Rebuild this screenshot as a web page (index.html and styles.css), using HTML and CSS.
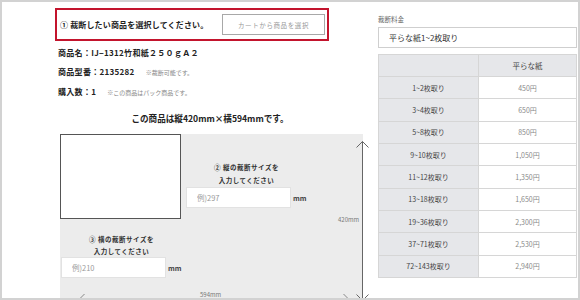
FILE: index.html
```html
<!DOCTYPE html>
<html lang="ja">
<head>
<meta charset="utf-8">
<title>裁断サービス</title>
<link rel="stylesheet" href="styles.css">
</head>
<body>
<div class="frame">
  <div class="left">
    <div class="pick-box">
      <span class="pick-title">① 裁断したい商品を選択してください。</span>
      <button class="cart-btn">カートから商品を選択</button>
    </div>
    <div class="info">
      <p class="info-row"><b>商品名：IJ−1312竹和紙２５０ｇＡ２</b></p>
      <p class="info-row"><b>商品型番：2135282</b><span class="note">※裁断可能です。</span></p>
      <p class="info-row"><b>購入数：1</b><span class="note">※この商品はパック商品です。</span></p>
    </div>
    <p class="size-line">この商品は縦420mm×横594mmです。</p>
    <div class="diagram">
      <div class="sheet"></div>
      <div class="cell-v">
        <div class="field">
          <div class="field-label">② 縦の裁断サイズを<br>入力してください</div>
          <div class="field-row"><input class="field-input" type="text" placeholder="例)297"><span class="unit">mm</span></div>
        </div>
      </div>
      <div class="cell-h">
        <div class="field field-h">
          <div class="field-label">③ 横の裁断サイズを<br>入力してください</div>
          <div class="field-row"><input class="field-input" type="text" placeholder="例)210"><span class="unit">mm</span></div>
        </div>
      </div>
      <svg class="arrow-v" width="13" height="160" viewBox="0 0 13 160">
        <path d="M6.5 0.5 V159.5 M0.5 6.5 L6.5 0.5 L12.5 6.5 M0.5 153.5 L6.5 159.5 L12.5 153.5" fill="none" stroke="#666" stroke-width="1"/>
      </svg>
      <span class="dim-v">420mm</span>
      <svg class="arrow-h" width="272" height="16" viewBox="0 0 272 16">
        <path d="M0.5 9 H271.5 M6.5 3 L0.5 9 L6.5 15 M265.5 3 L271.5 9 L265.5 15" fill="none" stroke="#888" stroke-width="1"/>
      </svg>
      <span class="dim-h">594mm</span>
    </div>
  </div>
  <div class="right">
    <div class="fee-label">裁断料金</div>
    <div class="fee-select">平らな紙1~2枚取り</div>
    <div class="price-table">
      <div class="pc head"></div><div class="pc head">平らな紙</div>
      <div class="pc key">1~2枚取り</div><div class="pc val">450円</div>
      <div class="pc key">3~4枚取り</div><div class="pc val">650円</div>
      <div class="pc key">5~8枚取り</div><div class="pc val">850円</div>
      <div class="pc key">9~10枚取り</div><div class="pc val">1,050円</div>
      <div class="pc key">11~12枚取り</div><div class="pc val">1,350円</div>
      <div class="pc key">13~18枚取り</div><div class="pc val">1,650円</div>
      <div class="pc key">19~36枚取り</div><div class="pc val">2,300円</div>
      <div class="pc key">37~71枚取り</div><div class="pc val">2,530円</div>
      <div class="pc key">72~143枚取り</div><div class="pc val">2,940円</div>
    </div>
  </div>
</div>
</body>
</html>
```
FILE: styles.css
```css
* { box-sizing: border-box; }
html, body { margin: 0; padding: 0; background: #fff; }
body { font-family: "Noto Sans CJK JP", "Noto Sans", sans-serif; color: #333; }

.frame {
  width: 580px;
  height: 300px;
  border: 2px solid #d2d2d2;
  overflow: hidden;
  display: flex;
  align-items: flex-start;
}

.left {
  width: 310px;
  margin-left: 53px;
  padding-top: 6px;
  flex: none;
}

.pick-box {
  height: 33px;
  border: 2px solid #c3142d;
  display: flex;
  align-items: center;
  justify-content: space-between;
  padding: 0 2px 0 3px;
  width: 274px;
}
.pick-title { font-size: 8px; font-weight: 700; color: #222; letter-spacing: 0.02em; }
.cart-btn {
  width: 103px;
  height: 21px;
  border: 1px solid #a8a8a8;
  background: #fff;
  font-family: inherit;
  font-size: 6.5px;
  color: #999;
  letter-spacing: 0.6px;
  padding: 0;
}

.info { margin-top: 2px; padding-left: 3px; }
.info-row { margin: 0; font-size: 8px; line-height: 19px; color: #222; }
.info-row b { font-weight: 700; letter-spacing: 0.3px; }
.note { font-size: 6px; color: #888; margin-left: 11px; }

.size-line {
  margin: 7px 0 0;
  text-align: center;
  font-size: 8.6px;
  font-weight: 700;
  line-height: 19px;
  color: #222;
}

.diagram {
  position: relative;
  margin-top: 6px;
  margin-left: 5px;
  width: 303px;
  height: 175px;
  background: #ececec;
  display: grid;
  grid-template-columns: 121px 1fr;
  grid-template-rows: 85px 1fr;
}
.sheet { background: #fff; border: 1px solid #555; }
.cell-v { padding: 17px 0 0 5px; }
.cell-h { grid-column: 1 / 3; padding: 4px 0 0 1px; }

.field { display: inline-flex; flex-direction: column; align-items: center; }
.field-label {
  font-size: 6.5px;
  font-weight: 700;
  line-height: 13px;
  text-align: center;
  color: #333;
  letter-spacing: 0.5px;
}
.field-h .field-label { line-height: 12px; }
.field-row { display: flex; align-items: center; }
.field-input {
  width: 105px;
  height: 21px;
  border: 1px solid #e2e2e2;
  background: #fff;
  font-family: inherit;
  font-size: 7.5px;
  padding: 0 0 0 10px;
  margin: 0;
  outline: none;
}
.field-input::placeholder { color: #9a9a9a; }
.unit { font-size: 7px; font-weight: 700; color: #444; margin-left: 2px; width: 14px; }

.arrow-v { position: absolute; left: 296px; top: 7px; }
.dim-v { position: absolute; left: 278px; top: 81px; font-size: 6px; color: #777; line-height: 10px; }
.arrow-h { position: absolute; left: 18px; top: 157px; }
.dim-h { position: absolute; left: 140px; top: 157px; font-size: 6px; color: #777; line-height: 8px; }

.right {
  width: 199px;
  margin-left: 13px;
  padding-top: 12px;
  flex: none;
}
.fee-label { font-size: 6.5px; line-height: 10px; color: #666; }
.fee-select {
  margin-top: 3px;
  height: 21px;
  border: 1px solid #cfcfcf;
  font-size: 8px;
  line-height: 19px;
  padding-left: 10px;
  color: #333;
}

.price-table {
  margin-top: 6px;
  display: grid;
  grid-template-columns: 100px 1fr;
  border-top: 1px solid #d6d6d6;
  border-left: 1px solid #d6d6d6;
  border-right: 1px solid #d6d6d6;
}
.pc {
  height: 22.33px;
  border-bottom: 1px solid #d6d6d6;
  display: flex;
  align-items: center;
  justify-content: center;
  font-size: 7px;
}
.pc:nth-child(odd) { border-right: 1px solid #d6d6d6; }
.pc.head { height: 22px; background: #e6e7ea; color: #444; font-size: 7.5px; }
.pc.key { background: #e6e7ea; color: #444; }
.pc.val { background: #fff; color: #8a8a8a; }
```
